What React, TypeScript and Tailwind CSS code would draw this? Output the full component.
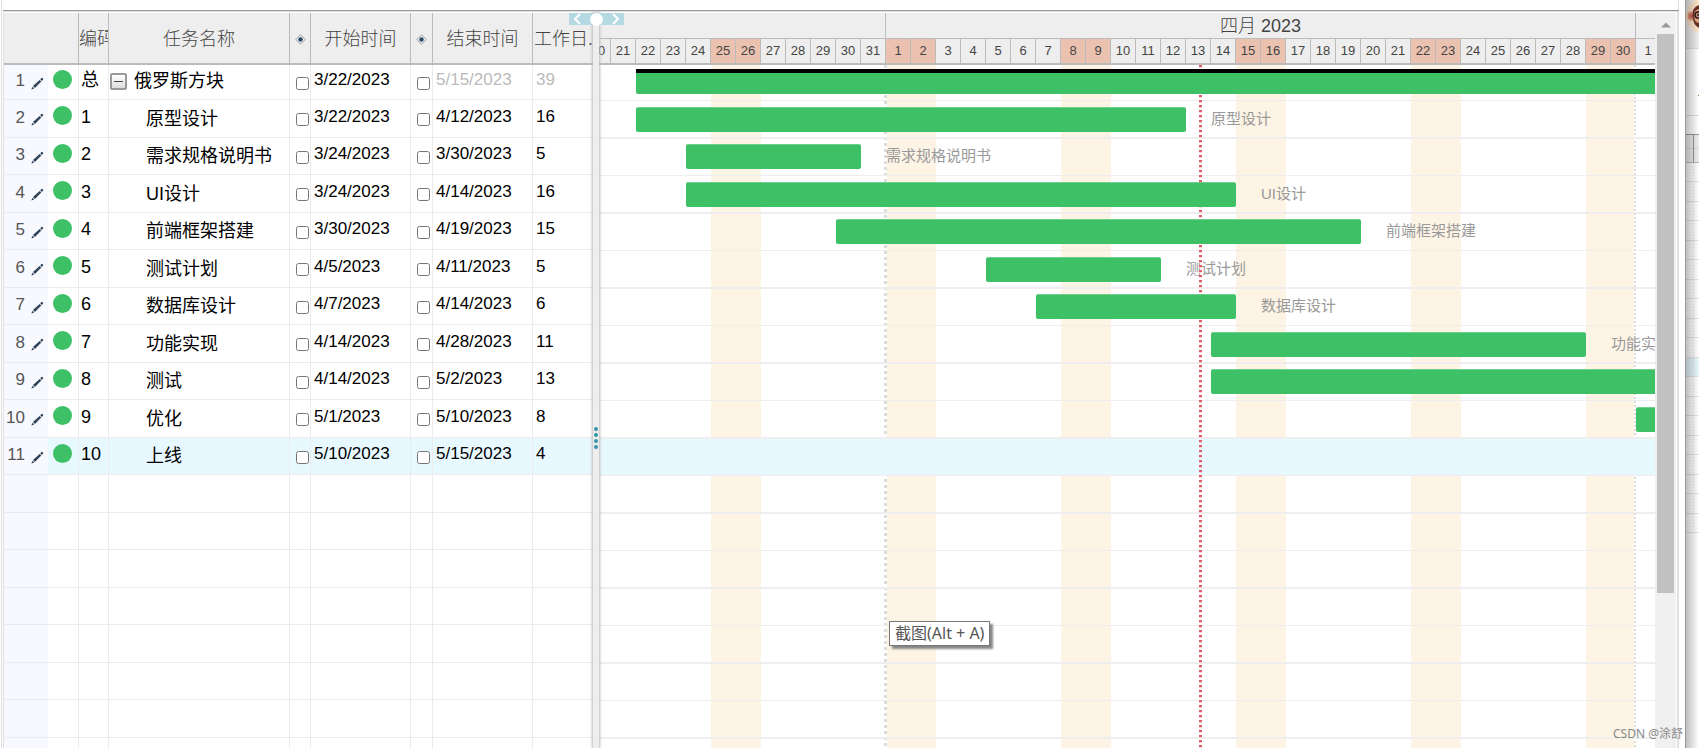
import { clsx } from "clsx";

type Task = {
  code: string;
  name: string;
  start: string;
  end: string;
  days: number;
  from: number;
  to: number;
  parent?: boolean;
  selected?: boolean;
};

// from / to are day offsets counted from 3/20/2023, `to` is exclusive
const TASKS: Task[] = [
  { code: "总", name: "俄罗斯方块", start: "3/22/2023", end: "5/15/2023", days: 39, from: 2, to: 57, parent: true },
  { code: "1", name: "原型设计", start: "3/22/2023", end: "4/12/2023", days: 16, from: 2, to: 24 },
  { code: "2", name: "需求规格说明书", start: "3/24/2023", end: "3/30/2023", days: 5, from: 4, to: 11 },
  { code: "3", name: "UI设计", start: "3/24/2023", end: "4/14/2023", days: 16, from: 4, to: 26 },
  { code: "4", name: "前端框架搭建", start: "3/30/2023", end: "4/19/2023", days: 15, from: 10, to: 31 },
  { code: "5", name: "测试计划", start: "4/5/2023", end: "4/11/2023", days: 5, from: 16, to: 23 },
  { code: "6", name: "数据库设计", start: "4/7/2023", end: "4/14/2023", days: 6, from: 18, to: 26 },
  { code: "7", name: "功能实现", start: "4/14/2023", end: "4/28/2023", days: 11, from: 25, to: 40 },
  { code: "8", name: "测试", start: "4/14/2023", end: "5/2/2023", days: 13, from: 25, to: 44 },
  { code: "9", name: "优化", start: "5/1/2023", end: "5/10/2023", days: 8, from: 42, to: 52 },
  { code: "10", name: "上线", start: "5/10/2023", end: "5/15/2023", days: 4, from: 51, to: 57, selected: true },
];

const EMPTY_ROWS = Array.from({ length: 8 }, (_, i) => i + TASKS.length);
const DAY_WIDTH = 25;
const VISIBLE_DAYS = 46;

const DAYS = Array.from({ length: VISIBLE_DAYS }, (_, i) => {
  const date = new Date(2023, 2, 20 + i);
  return {
    key: i,
    label: date.getDate(),
    weekend: date.getDay() === 0 || date.getDay() === 6,
  };
});

const PencilIcon = () => (
  <svg width="13" height="13" viewBox="0 0 13 13">
    <path d="M0.4 12.6 L1.4 9.8 L3.2 11.6 Z" fill="#2f4257" />
    <path d="M2 9.1 L8.6 2.9 L10.3 4.6 L3.9 11 Z" fill="#2f4257" />
    <path d="M9.2 2.3 L10.6 1 Q11.2 0.6 11.8 1.2 Q12.5 1.9 12 2.6 L10.9 4 Z" fill="#2f4257" />
  </svg>
);

const DiamondIcon = () => (
  <svg width="11" height="11" viewBox="0 0 11 11" className="mx-auto">
    <path d="M5.5 0.8 L10.2 5.5 L5.5 10.2 L0.8 5.5 Z" fill="#f4f4f4" stroke="#8a929c" strokeWidth="0.9" />
    <circle cx="5.5" cy="5.5" r="2.2" fill="#2a4668" />
  </svg>
);

const headCell = "h-[52px] border-r border-b-2 border-[#bbb] p-0 pt-0.5 font-light whitespace-nowrap overflow-hidden";

const TaskRow = ({ task, index }: { task?: Task; index: number }) => {
  const height = index === 0 ? "h-[35px]" : index % 2 ? "h-[38px]" : "h-[37px]";
  const cell = "border-r border-b border-[#ebebeb] p-0 whitespace-nowrap overflow-hidden";
  const dimmed = task?.parent && "text-[#bbb]";

  return (
    <tr className={clsx(height, task?.selected && "bg-[#e8f8ff]")}>
      <td className={clsx(height, "border-b border-[#ebebeb] bg-[#f8f9ff] p-0 pb-0.5 text-[17px] text-[#555]")}>
        {task && (
          <div className="flex items-center justify-end gap-1.5 pr-1">
            {index + 1}
            <button aria-label={`编辑 ${task.name}`} className="pt-1">
              <PencilIcon />
            </button>
          </div>
        )}
      </td>
      <td className={cell}>
        {task && <div className="mb-1.5 ml-[5px] size-[19px] rounded-full bg-[#3dc066]" />}
      </td>
      <td className={clsx(cell, "pb-1 pl-0.5")}>{task?.code}</td>
      <td className={clsx(cell, task?.parent && "pb-0.5")}>
        {task?.parent && (
          <div className="flex items-center gap-[7px] pl-px">
            <button
              aria-label="折叠"
              className="flex size-[17px] items-center justify-center rounded-xs border-2 border-[#999] bg-linear-to-b from-white to-[#ddd]"
            >
              <span className="h-px w-[9px] bg-[#444]" />
            </button>
            {task.name}
          </div>
        )}
        {task && !task.parent && <div className="pl-[37px]">{task.name}</div>}
      </td>
      <td className={cell}>
        {task && <input type="checkbox" aria-label={`${task.name} 固定开始`} className="mt-0.5 ml-1.5 block size-[13px]" />}
      </td>
      <td className={clsx(cell, "pb-1 pl-[3px] text-[17px]")}>{task?.start}</td>
      <td className={cell}>
        {task && <input type="checkbox" aria-label={`${task.name} 固定结束`} className="mt-0.5 ml-1.5 block size-[13px]" />}
      </td>
      <td className={clsx(cell, "pb-1 pl-[3px] text-[17px]", dimmed)}>{task?.end}</td>
      <td className={clsx("border-b border-[#ebebeb] p-0 pb-1 pl-[3px] text-[17px]", dimmed)}>{task?.days}</td>
    </tr>
  );
};

const TaskTable = () => (
  <div className="w-[589px] shrink-0 overflow-hidden">
    <table className="w-full table-fixed border-separate border-spacing-0 text-left text-lg leading-6">
      <colgroup>
        <col className="w-[44px]" />
        <col className="w-[31px]" />
        <col className="w-[30px]" />
        <col className="w-[181px]" />
        <col className="w-[21px]" />
        <col className="w-[100px]" />
        <col className="w-[22px]" />
        <col className="w-[100px]" />
        <col className="w-[60px]" />
      </colgroup>
      <thead className="bg-[#eee] text-[#444]">
        <tr>
          <th className="border-b-2 border-[#bbb]" />
          <th className={headCell} />
          <th className={headCell}>编码</th>
          <th className={clsx(headCell, "text-center")}>任务名称</th>
          <th className={headCell}><DiamondIcon /></th>
          <th className={clsx(headCell, "text-center")}>开始时间</th>
          <th className={headCell}><DiamondIcon /></th>
          <th className={clsx(headCell, "text-center")}>结束时间</th>
          <th className="border-b-2 border-[#bbb] p-0 pt-0.5 pl-px font-light whitespace-nowrap">工作日.</th>
        </tr>
      </thead>
      <tbody>
        {TASKS.map((task, i) => (
          <TaskRow key={task.code} task={task} index={i} />
        ))}
        {EMPTY_ROWS.map((i) => (
          <TaskRow key={i} index={i} />
        ))}
      </tbody>
    </table>
  </div>
);

const Splitter = () => (
  <div className="relative z-20 flex w-1.5 shrink-0 flex-col items-center bg-[#eee] shadow-[0_0_3px_1px_#bbb]">
    <div className="absolute top-0 -left-6 flex h-3 w-[55px] items-center justify-between bg-[#b5d9e3] px-1">
      <svg width="9" height="12" viewBox="0 0 9 12" fill="none" stroke="#fff" strokeWidth="2">
        <path d="M7 1 L2 6 L7 11" />
      </svg>
      <span className="size-[13px] rounded-full bg-white" />
      <svg width="9" height="12" viewBox="0 0 9 12" fill="none" stroke="#fff" strokeWidth="2">
        <path d="M2 1 L7 6 L2 11" />
      </svg>
    </div>
    <div className="mt-[414px] flex flex-col gap-0.5">
      {[0, 1, 2, 3].map((i) => (
        <span key={i} className="size-1 rounded-full bg-[#3695a8]" />
      ))}
    </div>
  </div>
);

const ChartRow = ({ task, index }: { task?: Task; index: number }) => (
  <div
    className={clsx(
      "flex items-end border-[#eee]",
      index === 0 ? "h-[36px] border-b pb-1.5" : index % 2 ? "h-[38px] border-b-2 pb-[5px]" : "h-[37px] border-b pb-1.5",
      task?.selected ? "relative bg-[#e8f8ff]" : "relative",
    )}
  >
    {task && !task.selected && (
      <>
        <div
          className={clsx(
            "relative z-10 h-[25px] shrink-0 bg-[#3dc066]",
            task.parent ? "rounded-b-xs border-t-4 border-black" : "rounded-xs border-t border-[#6fd08d]",
          )}
          style={{ marginLeft: task.from * DAY_WIDTH, width: (task.to - task.from) * DAY_WIDTH }}
        />
        {!task.parent && (
          <span className="shrink-0 pl-[25px] text-[15px] leading-[26px] text-[#999]">{task.name}</span>
        )}
      </>
    )}
  </div>
);

const GanttChart = () => (
  <div className="min-w-0 flex-1 overflow-hidden">
    <div className="-ml-[13px] w-[1150px]">
      <div className="border-b-2 border-[#bbb] bg-[#eee] text-[#444]">
        <div className="flex h-[26px] border-b border-[#bbb] text-lg leading-[26px]">
          <div className="w-[300px] border-r border-[#bbb]" />
          <div className="w-[750px] border-r border-[#bbb] text-center font-light">四月 2023</div>
        </div>
        <div className="flex h-6 text-[13px] leading-[23px]">
          {DAYS.map((day) => (
            <div
              key={day.key}
              className={clsx("w-[25px] border-r border-[#bbb] text-center", day.weekend && "bg-[#ebc2b0]")}
            >
              {day.label}
            </div>
          ))}
        </div>
      </div>
      <div className="relative">
        <div className="absolute inset-0 flex">
          {DAYS.map((day) => (
            <div key={day.key} className={clsx("w-[25px]", day.weekend && "bg-[#fef4e5]")} />
          ))}
        </div>
        <div className="absolute inset-y-0 left-[298px] w-[3px] bg-[repeating-linear-gradient(to_bottom,#ddd_0_3px,#fff_3px_6px)]" />
        <div className="absolute inset-y-0 left-[1048px] w-0.5 bg-[repeating-linear-gradient(to_bottom,#ddd_0_2px,#fff_2px_4px)]" />
        {TASKS.map((task, i) => (
          <ChartRow key={task.code} task={task} index={i} />
        ))}
        {EMPTY_ROWS.map((i) => (
          <ChartRow key={i} index={i} />
        ))}
        {/* today */}
        <div className="absolute inset-y-0 left-[613px] w-[3px] bg-[repeating-linear-gradient(to_bottom,#e05a68_0_2px,#f9d5d8_2px_3px,transparent_3px_5px)]" />
      </div>
    </div>
  </div>
);

const ScrollBar = () => (
  <div className="w-[21px] shrink-0 bg-[#f0f0f0] px-0.5">
    <button aria-label="向上滚动" className="flex h-[21px] w-[17px] items-center justify-center pt-0.5">
      <svg width="10" height="6" viewBox="0 0 10 6">
        <path d="M5 0.5 L10 5.5 H0 Z" fill="#999" />
      </svg>
    </button>
    <div className="h-[559px] w-[17px] bg-[#c1c1c1]" />
  </div>
);

const BackgroundWindow = () => (
  <aside className="relative w-3.5 shrink-0 overflow-hidden bg-white">
    <div className="flex h-[49px] justify-end border-b border-[#ddd] bg-[#eee]">
      <svg width="14" height="38" viewBox="0 0 14 38">
        <circle cx="19" cy="16" r="18" fill="#fde6cb" />
        <ellipse cx="6" cy="16" rx="3.5" ry="4.5" fill="#e99b80" />
        <ellipse cx="6" cy="16" rx="1.8" ry="2.6" fill="#c96a58" />
        <path d="M14 5 Q7 7 7.5 16 Q8 25 14 28 Z" fill="#6b2f24" />
        <path d="M14 9 Q9 10 9 15 Q9 20 11 22 L14 23 Z" fill="#e3a783" />
        <circle cx="13" cy="15" r="3" fill="#c9a084" stroke="#2b1512" strokeWidth="1.5" />
        <circle cx="13" cy="15" r="1" fill="#2b1512" />
      </svg>
    </div>
    <div className="flex h-[67px] justify-end border-b border-[#ddd] pt-[46px]">
      <span className="h-px w-px bg-[#a8762f]" />
    </div>
    <div className="h-[19px] border-b border-[#999]" />
    <div className="flex h-[28px] border-b border-[#bbb] bg-[#eee]">
      <div className="h-full w-[9px] border-r border-[#999]">
        <div className="h-[14px] border-b border-[#ddd]" />
      </div>
      <div className="h-[14px] flex-1 border-b border-[#ddd]" />
    </div>
    <div className="relative">
      {Array.from({ length: 19 }, (_, i) => (
        <div
          key={i}
          className={clsx("border-b border-[#e5e5e5]", i % 2 ? "h-5" : "h-[19px]", i === 10 && "bg-[#e8f8ff]")}
        />
      ))}
      <div className="absolute inset-y-0 left-2 w-px bg-[repeating-linear-gradient(to_bottom,#ddd_0_1px,transparent_1px_3px)]" />
    </div>
    <div className="absolute inset-0 border-l border-[#999] bg-linear-to-r from-black/25 to-transparent" />
  </aside>
);

export default function App() {
  return (
    <div className="relative flex h-screen overflow-hidden bg-white pl-px font-['Liberation_Sans','Noto_Sans_CJK_SC',sans-serif] text-black">
      <main className="flex min-w-0 flex-1 flex-col border-l border-[#ddd] pl-px">
        <div className="h-2.5 shrink-0 border-r border-[#ddd]" />
        <div className="flex min-h-0 flex-1 border-t border-[#999]">
          <div className="flex min-w-0 flex-1 border-t border-r-2 border-l border-[#e0e0e4] pt-px pr-px">
            <TaskTable />
            <Splitter />
            <GanttChart />
            <ScrollBar />
          </div>
        </div>
      </main>
      <div className="w-1.5 shrink-0" />
      <BackgroundWindow />
      <div
        role="tooltip"
        className="absolute top-[621px] left-[889px] z-30 border border-[#777] bg-white px-[5px] font-['Noto_Sans','Noto_Sans_CJK_SC',sans-serif] text-base leading-[23px] text-[#555] shadow-[3px_3px_2px_#888]"
      >
        截图(Alt + A)
      </div>
      <span className="absolute right-4 bottom-1.5 z-30 font-['Noto_Sans','Noto_Sans_CJK_SC',sans-serif] text-xs text-[#888]">
        CSDN @涂舒
      </span>
    </div>
  );
}
